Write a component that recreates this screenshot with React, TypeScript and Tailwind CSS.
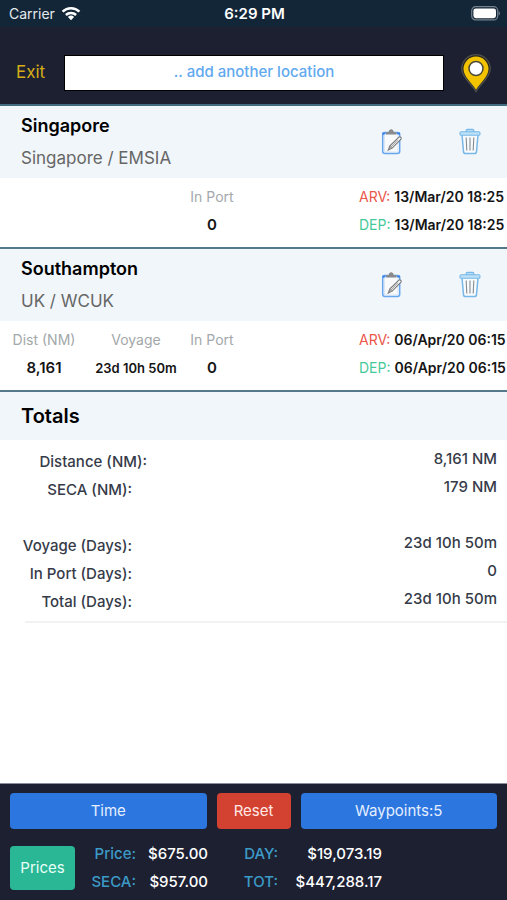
type Stop = {
  name: string;
  region: string;
  distance?: string;
  voyage?: string;
  inPort: string;
  arrival: string;
  departure: string;
};

const stops: Stop[] = [
  {
    name: "Singapore",
    region: "Singapore / EMSIA",
    inPort: "0",
    arrival: "13/Mar/20 18:25",
    departure: "13/Mar/20 18:25",
  },
  {
    name: "Southampton",
    region: "UK / WCUK",
    distance: "8,161",
    voyage: "23d 10h 50m",
    inPort: "0",
    arrival: "06/Apr/20 06:15",
    departure: "06/Apr/20 06:15",
  },
];

function WifiIcon() {
  return (
    <svg viewBox="0 0 20 15" className="h-[15px] w-5" aria-hidden="true">
      <g fill="none" stroke="#fff" strokeWidth="2.5">
        <path d="M1.6 5.6a12 12 0 0 1 16.8 0" />
        <path d="M4.9 9a7.3 7.3 0 0 1 10.2 0" />
      </g>
      <path d="M10 14.2 6.9 11a4.5 4.5 0 0 1 6.2 0z" fill="#fff" />
    </svg>
  );
}

function BatteryIcon() {
  return (
    <svg viewBox="0 0 30 15" className="h-[15px] w-[30px]" aria-hidden="true">
      <rect x="1.7" y=".7" width="26" height="13.2" rx="4" fill="none" stroke="#75828d" strokeWidth="1.2" />
      <rect x="3.4" y="2.4" width="22.6" height="9.8" rx="2.4" fill="#fff" />
      <path d="M28.6 5v4.600c.8-.4 1.300-1.300 1.300-2.300s-.5-1.900-1.300-2.300z" fill="#75828d" />
    </svg>
  );
}

function PinIcon() {
  return (
    <svg viewBox="0 0 32 40" className="h-10 w-8" aria-hidden="true">
      <path
        d="M16 38.600C11.500 31 1.700 24 1.700 16a14.300 14.300 0 0 1 28.600 0c0 8-9.800 15-14.300 22.600z"
        fill="#2b2a20"
        stroke="#50504d"
        strokeWidth="1.200"
      />
      <path d="M16 36.800C12 30 3.500 23.600 3.500 16a12.500 12.500 0 0 1 25 0c0 7.600-8.500 14-12.500 20.800z" fill="#f3c300" />
      <circle cx="16" cy="15.500" r="7" fill="#fff" stroke="#4d4938" strokeWidth="1.500" />
    </svg>
  );
}

function EditIcon() {
  return (
    <svg viewBox="0 0 22 28" className="h-7 w-[22px]" aria-hidden="true" fill="none">
      <rect x="1.700" y="4.500" width="17" height="21" rx="2.200" stroke="#68a6f0" strokeWidth="1.500" />
      <path d="M3.500 6v18h13.400V6z" fill="#f8fafc" stroke="#cbdcf0" strokeWidth=".6" />
      <path d="M5 6.500V4.200h2.600c.3-4 4.900-4 5.200 0h2.800v2.300z" fill="#8b8b8b" />
      <path d="M2.300 6.700V5.300h2.200M18.200 6.700V5.300H16" stroke="#3d86e8" strokeWidth="1.800" />
      <path d="m7.300 22 1.600-4.200 9-8.700c1-.9 3 .7 2.100 2l-8.600 8.800z" fill="#fafafa" stroke="#777" strokeWidth="1.100" />
      <path d="m9.100 18 2.200 1.900m-4 2 3.500-3.700 6-6.300" stroke="#888" strokeWidth=".8" />
    </svg>
  );
}

function TrashIcon() {
  return (
    <svg viewBox="0 0 22 28" className="h-7 w-[22px]" aria-hidden="true" fill="none">
      <path d="M7.200 4V2.600c0-.8.5-1.200 1.200-1.200h5.200c.7 0 1.200.4 1.200 1.200V4" fill="#b7def7" stroke="#78b8e8" strokeWidth="1.200" />
      <path d="m3 7 1.500 16.600c.1 1.400.9 2 2.200 2h8.600c1.300 0 2.100-.6 2.200-2L19 7" fill="#f8fafc" stroke="#78b8e8" strokeWidth="1.500" />
      <rect x="1" y="3.800" width="20" height="3.500" rx="1.300" fill="#bde1f7" stroke="#78b8e8" strokeWidth="1.100" />
      <path d="m7.200 9.500.6 13M11 9.500v13M14.800 9.500l-.6 13" stroke="#858c92" strokeWidth="1.100" />
    </svg>
  );
}

function Stat({ label, value, small }: { label: string; value?: string; small?: boolean }) {
  if (!value) return <div />;
  return (
    <div className="text-center">
      <dt className="text-sm leading-7 text-[#a3a8aa]">{label}</dt>
      <dd className={small ? "text-[13px] leading-7 font-semibold" : "text-[15px] leading-7 font-semibold"}>{value}</dd>
    </div>
  );
}

function StopCard({ stop }: { stop: Stop }) {
  return (
    <section className="border-b-2 border-[#54798c] text-[#151515]">
      <header className="flex h-[72px] items-center bg-[#f1f6fa] pr-[26px] pl-[21px]">
        <div className="flex-1">
          <h2 className="pb-1 text-lg leading-7 font-semibold text-black">{stop.name}</h2>
          <p className="text-[17px] leading-7 text-[#666]">{stop.region}</p>
        </div>
        <div className="flex gap-14">
          <button aria-label={`Edit ${stop.name}`}>
            <EditIcon />
          </button>
          <button aria-label={`Delete ${stop.name}`}>
            <TrashIcon />
          </button>
        </div>
      </header>
      <div className="flex justify-between pt-[5px] pb-2">
        <dl className="grid grid-cols-[88px_96px_56px] whitespace-nowrap">
          <Stat label="Dist (NM)" value={stop.distance} />
          <Stat label="Voyage" value={stop.voyage} small />
          <Stat label="In Port" value={stop.inPort} />
        </dl>
        <dl className="w-[148px] text-sm whitespace-nowrap">
          <div className="flex gap-1">
            <dt className="leading-7 text-[#e9574a]">ARV:</dt>
            <dd className="leading-7 font-semibold">{stop.arrival}</dd>
          </div>
          <div className="flex gap-1">
            <dt className="leading-7 text-[#45c99a]">DEP:</dt>
            <dd className="leading-7 font-semibold">{stop.departure}</dd>
          </div>
        </dl>
      </div>
    </section>
  );
}

function TotalRow({ label, value, wide }: { label: string; value: string; wide?: boolean }) {
  return (
    <div className="flex h-7 justify-between pr-[10px]">
      <dt className={wide ? "w-[147px] pt-1 text-right leading-6" : "w-[132px] pt-1 text-right leading-6"}>{label}</dt>
      <dd className="leading-[26px]">{value}</dd>
    </div>
  );
}

export default function App() {
  return (
    <div className="flex min-h-screen flex-col bg-white font-['Inter',sans-serif]">
      <div className="grid grid-cols-3 items-center bg-[#132638] pr-[7px] pl-[9px] text-white">
        <div className="flex items-center gap-[6px] text-sm leading-[27px] text-[#e5eaed]">
          Carrier <WifiIcon />
        </div>
        <div className="text-center text-[15px] leading-[27px] font-semibold">6:29 PM</div>
        <div className="flex justify-end">
          <BatteryIcon />
        </div>
      </div>

      <header className="flex items-center border-b-2 border-[#426c80] bg-[#1d2031] pt-[26px] pr-[15px] pb-[11px] pl-4">
        <button className="w-12 text-left text-[17px] text-[#d5ac16]">Exit</button>
        <input
          type="text"
          aria-label="Add another location"
          placeholder=".. add another location"
          className="h-9 min-w-0 flex-1 border border-black bg-white pb-1 text-center text-[15px] font-medium outline-none placeholder:text-[#62a9ef]"
        />
        <button aria-label="Show map" className="ml-4">
          <PinIcon />
        </button>
      </header>

      <main className="flex-1">
        {stops.map((stop) => (
          <StopCard key={stop.name} stop={stop} />
        ))}
        <section className="text-[15px] font-medium text-[#363b49]">
          <h2 className="bg-[#f1f6fa] pl-[21px] text-xl leading-[48px] font-semibold text-black">Totals</h2>
          <dl className="pt-[6px]">
            <TotalRow label="Distance (NM):" value="8,161 NM" wide />
            <TotalRow label="SECA (NM):" value="179 NM" />
            <div className="pt-7">
              <TotalRow label="Voyage (Days):" value="23d 10h 50m" />
              <TotalRow label="In Port (Days):" value="0" />
              <TotalRow label="Total (Days):" value="23d 10h 50m" />
            </div>
          </dl>
          <hr className="mt-[7px] ml-[25px] border-t-2 border-[#f2f2f3]" />
        </section>
      </main>

      <footer className="border-t border-[#8b8d98] bg-[#1d2031] px-[10px] pt-[9px] pb-1 text-[15px] text-white">
        <div className="flex gap-[10px]">
          <button className="h-9 flex-1 rounded bg-[#2c76df] text-[#e5efff]">Time</button>
          <button className="h-9 w-[74px] rounded bg-[#d34130] text-[#ffe9e6]">Reset</button>
          <button className="h-9 flex-1 rounded bg-[#2c76df] text-[#e5efff]">Waypoints:5</button>
        </div>
        <div className="flex items-center pt-[11px]">
          <button className="h-11 w-[65px] rounded bg-[#2ab795] text-[#e8fff8]">Prices</button>
          <dl className="grid grid-cols-[61px_72px_70px_104px] text-right leading-7 font-medium">
            <dt className="text-[#3c9bc7]">Price:</dt>
            <dd>$675.00</dd>
            <dt className="text-[#3c9bc7]">DAY:</dt>
            <dd>$19,073.19</dd>
            <dt className="text-[#3c9bc7]">SECA:</dt>
            <dd>$957.00</dd>
            <dt className="text-[#3c9bc7]">TOT:</dt>
            <dd>$447,288.17</dd>
          </dl>
        </div>
      </footer>
    </div>
  );
}
